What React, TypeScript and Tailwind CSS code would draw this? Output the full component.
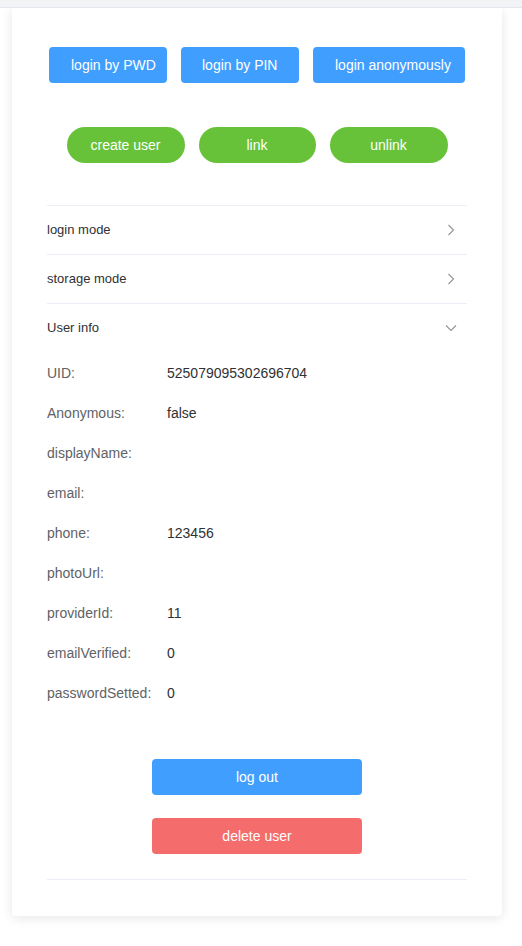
import { useState } from 'react'

const font = { fontFamily: '"Liberation Sans", Arial, sans-serif' }

const userInfo: [string, string][] = [
  ['UID:', '525079095302696704'],
  ['Anonymous:', 'false'],
  ['displayName:', ''],
  ['email:', ''],
  ['phone:', '123456'],
  ['photoUrl:', ''],
  ['providerId:', '11'],
  ['emailVerified:', '0'],
  ['passwordSetted:', '0'],
]

function ChevronRight() {
  return (
    <svg width="12" height="12" viewBox="0 0 12 12" fill="none">
      <path d="M3.5 1 L8.5 6 L3.5 11" stroke="#909399" strokeWidth="1.1" />
    </svg>
  )
}

function ChevronDown() {
  return (
    <svg width="12" height="12" viewBox="0 0 12 12" fill="none">
      <path d="M1 3.5 L6 8.5 L11 3.5" stroke="#909399" strokeWidth="1.1" />
    </svg>
  )
}

function CollapseItem({ title, open, children }: { title: string; open?: boolean; children?: React.ReactNode }) {
  return (
    <div className="border-b border-[#ebeef5]">
      <div className="h-[48px] flex items-center justify-between text-[13px] text-[#303133]">
        <span>{title}</span>
        <span className="mr-[10px] flex items-center">{open ? <ChevronDown /> : <ChevronRight />}</span>
      </div>
      {open && children}
    </div>
  )
}

export default function App() {
  const [open] = useState(true)

  return (
    <div className="min-h-[946px] bg-white" style={font}>
      <div className="relative z-10 h-[8px] bg-[#f2f3f5] border-b border-[#e4e7ed]" />

      <div className="ml-[12px] w-[490px] bg-white rounded-b-[4px] shadow-[0_2px_12px_0_rgba(0,0,0,0.1)] px-[35px] pt-[39px] pb-[36px]">
        {/* login buttons */}
        <div className="flex justify-center gap-[14px]">
          <button className="w-[118px] h-[36px] rounded-[4px] bg-[#409eff] text-white text-[14px] text-left pl-[22px]">login by PWD</button>
          <button className="w-[118px] h-[36px] rounded-[4px] bg-[#409eff] text-white text-[14px] text-left pl-[21px]">login by PIN</button>
          <button className="w-[152px] h-[36px] rounded-[4px] bg-[#409eff] text-white text-[14px] text-left pl-[22px]">login anonymously</button>
        </div>

        {/* account buttons */}
        <div className="flex justify-center gap-[14px] mt-[44px]">
          <button className="w-[118px] h-[36px] rounded-full bg-[#67c23a] text-white text-[14px]">create user</button>
          <button className="w-[117px] h-[36px] rounded-full bg-[#67c23a] text-white text-[14px]">link</button>
          <button className="w-[118px] h-[36px] rounded-full bg-[#67c23a] text-white text-[14px]">unlink</button>
        </div>

        <div className="mt-[42px] border-t border-[#ebeef5]">
          <CollapseItem title="login mode" />
          <CollapseItem title="storage mode" />
          <CollapseItem title="User info" open={open}>
            <div className="pt-[1px] pb-[25px]">
              {userInfo.map(([label, value]) => (
                <div key={label} className="h-[40px] flex items-center text-[14px]">
                  <span className="w-[120px] text-[#606266]">{label}</span>
                  <span className="text-[#303133]">{value}</span>
                </div>
              ))}
              <div className="flex flex-col items-center mt-[46px] gap-[23px]">
                <button className="w-[210px] h-[36px] rounded-[4px] bg-[#409eff] text-white text-[14px]">log out</button>
                <button className="w-[210px] h-[36px] rounded-[4px] bg-[#f56c6c] text-white text-[14px]">delete user</button>
              </div>
            </div>
          </CollapseItem>
        </div>
      </div>
    </div>
  )
}
